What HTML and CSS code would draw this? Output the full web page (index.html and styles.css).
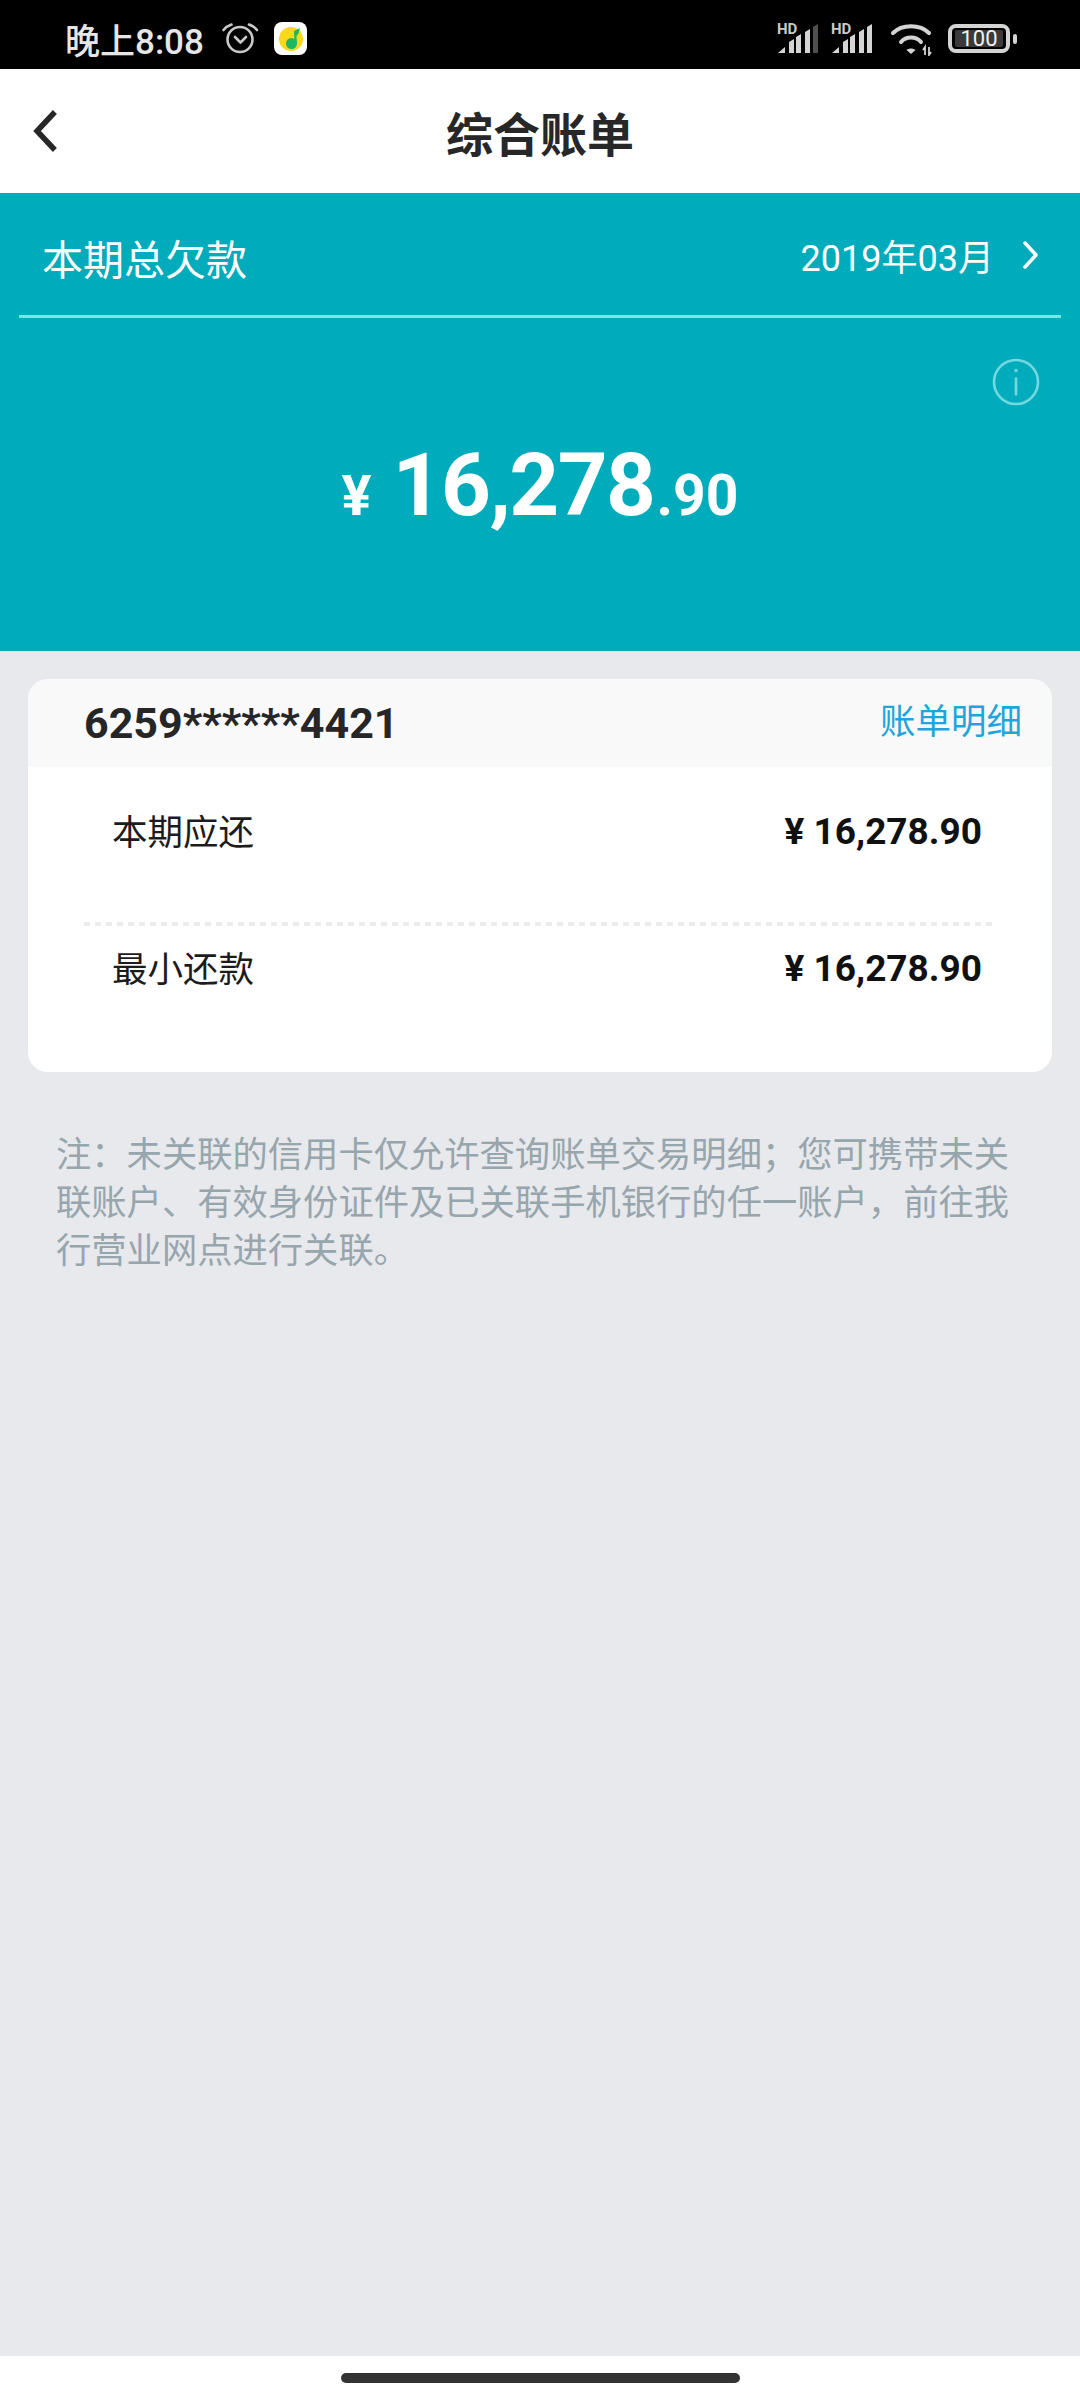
FILE: index.html
```html
<!DOCTYPE html>
<html lang="zh-CN">
<head>
<meta charset="UTF-8" />
<meta name="viewport" content="width=device-width, initial-scale=1.0" />
<title>综合账单</title>
<link rel="stylesheet" href="styles.css">
</head>
<body>
<div class="statusbar">
    <div class="status-left">
        <span class="clock">晚上8:08</span>
        <svg class="alarm" width="40" height="36" viewBox="0 0 40 36" fill="none" stroke="#c9c9c9" stroke-width="2.600" stroke-linecap="round" stroke-linejoin="round">
            <circle cx="20" cy="18.500" r="12.500"/>
            <path d="M15 16l5.500 5.500L26 16"/>
            <path d="M3.500 9C5.500 6.500 8.500 4.500 11.500 3.500M37 9C35 6.500 32 4.500 29 3.500"/>
        </svg>
        <svg class="appicon" width="33" height="33" viewBox="0 0 33 33">
            <rect width="33" height="33" rx="8" fill="#fff"/>
            <circle cx="17" cy="17" r="12" fill="#fbd81b"/>
            <circle cx="17.500" cy="21.500" r="5.500" fill="#1fb765"/>
            <path d="M20.500 22L20 9l6-3-1.500 5.500-2 2.500.5 8z" fill="#1fb765"/>
        </svg>
    </div>
    <div class="status-right">
        <div class="signal">
            <span class="hd">HD</span>
            <svg width="42" height="29" viewBox="0 0 42 29" fill="#d4d4d4">
                <path d="M0 29l7-6v6z"/>
                <path d="M11 18l5-3v14h-5z"/>
                <path d="M18 13l5-3v19h-5z"/>
                <path d="M27 8l5-3v24h-5z"/>
                <path d="M35 3l5-3v29h-5z" fill="#4f4f4f"/>
            </svg>
        </div>
        <div class="signal">
            <span class="hd">HD</span>
            <svg width="42" height="29" viewBox="0 0 42 29" fill="#d4d4d4">
                <path d="M0 29l7-6v6z"/>
                <path d="M11 18l5-3v14h-5z"/>
                <path d="M18 13l5-3v19h-5z"/>
                <path d="M27 8l5-3v24h-5z"/>
                <path d="M35 3l5-3v29h-5z"/>
            </svg>
        </div>
        <svg class="wifi" width="44" height="32" viewBox="0 0 44 32" fill="none" stroke="#d4d4d4" stroke-width="4" stroke-linecap="round">
            <path d="M3 9C12 0 30 0 39 9"/>
            <path d="M11 18C16 12 26 12 31 18"/>
            <path d="M21 30l-4.500-4c2.500-2 6.500-2 9 0z" fill="#d4d4d4" stroke="none"/>
            <path d="M35 31v-8l-2 3M39 23v8l2-3" stroke-width="1.800" stroke-linecap="butt"/>
        </svg>
        <div class="battery">
            <div class="battery-body"><span class="battery-num">100</span></div>
            <div class="battery-nub"></div>
        </div>
    </div>
</div>

<header class="navbar">
    <svg class="back" width="28" height="42" viewBox="0 0 28 42" fill="none" stroke="#272727" stroke-width="5.500" stroke-linecap="square">
        <path d="M21 4L5 21l16 17"/>
    </svg>
    <h1>综合账单</h1>
</header>

<section class="hero">
    <div class="hero-top">
        <span class="hero-label">本期总欠款</span>
        <span class="hero-date">2019年03月
            <svg width="18" height="30" viewBox="0 0 18 30" fill="none" stroke="#fff" stroke-width="3.500" stroke-linecap="round" stroke-linejoin="round">
                <path d="M3 3l11 12L3 27"/>
            </svg>
        </span>
    </div>
    <svg class="info" width="48" height="48" viewBox="0 0 48 48" fill="none" stroke="#73d8e0" stroke-width="2.600">
        <circle cx="24" cy="24" r="22"/>
        <path d="M24 19.500v18"/>
        <circle cx="24" cy="12.500" r="1.300" fill="#73d8e0" stroke-width="1"/>
    </svg>
    <div class="amount">
        <span class="amount-yen">¥</span><span class="amount-int">16,278</span><span class="amount-dec">.90</span>
    </div>
</section>

<main class="content">
    <div class="card">
        <div class="card-head">
            <span class="card-no">6259******4421</span>
            <a class="card-link">账单明细</a>
        </div>
        <div class="card-body">
            <div class="row row-first">
                <span class="row-label">本期应还</span>
                <span class="row-val">¥ 16,278.90</span>
            </div>
            <div class="row-divider"></div>
            <div class="row">
                <span class="row-label">最小还款</span>
                <span class="row-val">¥ 16,278.90</span>
            </div>
        </div>
    </div>
    <p class="note">注&#65306;未关联的信用卡仅允许查询账单交易明细&#65307;您可携带未关联账户、有效身份证件及已关联手机银行的任一账户&#65292;前往我行营业网点进行关联。</p>
</main>

<div class="homebar"><div class="home-pill"></div></div>
</body>
</html>
```

FILE: styles.css
```css
* {
    box-sizing: border-box;
}
body {
    margin: 0;
    width: 1080px;
    height: 2400px;
    display: flex;
    flex-direction: column;
    font-family: Roboto, "Noto Sans CJK SC", sans-serif;
    background-color: #e7e9ed;
    color: #222;
}
.statusbar {
    height: 69px;
    flex: none;
    background: #000;
    display: flex;
    justify-content: space-between;
    align-items: center;
    padding: 8px 63px 0 65px;
}
.status-left, .status-right {
    display: flex;
    align-items: center;
}
.clock {
    font-size: 35px;
    font-weight: 500;
    color: #e6e6e6;
    width: 155px;
}
.alarm {
    margin-right: 14px;
}
.status-right {
    gap: 12px;
}
.signal {
    position: relative;
    width: 42px;
    height: 29px;
}
.hd {
    position: absolute;
    left: -1px;
    top: -1px;
    font-size: 15px;
    font-weight: 700;
    line-height: 12px;
    color: #c9c9c9;
}
.wifi {
    margin: 2px 2px 0 4px;
}
.battery {
    display: flex;
    align-items: center;
    gap: 3px;
}
.battery-body {
    width: 62px;
    height: 29px;
    border: 4px solid #d4d4d4;
    border-radius: 8px;
    padding: 2px 3px;
    display: flex;
}
.battery-num {
    flex: 1;
    background: #3a3a3a;
    border-radius: 2px;
    color: #f0f0f0;
    font-size: 22px;
    line-height: 17px;
    text-align: center;
}
.battery-nub {
    width: 4px;
    height: 10px;
    border-radius: 2px;
    background: #d4d4d4;
}
.navbar {
    height: 124px;
    flex: none;
    background: #fff;
    display: flex;
    align-items: center;
    justify-content: center;
    position: relative;
}
.back {
    position: absolute;
    left: 32px;
    top: 41px;
}
.navbar h1 {
    margin: 0;
    font-size: 47px;
    font-weight: 700;
    color: #272727;
}
.hero {
    height: 458px;
    flex: none;
    background: #00acbb;
    color: #fff;
    position: relative;
}
.hero-top {
    height: 125px;
    margin: 0 19px;
    padding: 2px 21px 0 23px;
    border-bottom: 3px solid #7de3ea;
    display: flex;
    justify-content: space-between;
    align-items: center;
}
.hero-label {
    font-size: 41px;
    margin-top: 4px;
}
.hero-date {
    font-size: 36px;
    display: flex;
    align-items: center;
    gap: 28px;
}
.info {
    position: absolute;
    right: 40px;
    top: 165px;
}
.amount {
    display: flex;
    align-items: baseline;
    justify-content: center;
    margin-top: 117px;
    line-height: 100px;
}
.amount-yen {
    font-size: 56px;
    font-weight: 700;
    margin-right: 21px;
}
.amount-int {
    font-size: 87px;
    font-weight: 700;
    letter-spacing: -1.500px;
}
.amount-dec {
    font-size: 57px;
    font-weight: 700;
    margin-left: 2px;
}
.content {
    flex: 1;
    padding: 28px 28px 0;
}
.card {
    background: #fff;
    border-radius: 20px;
    overflow: hidden;
    height: 393px;
}
.card-head {
    height: 88px;
    background: #f9f9fa;
    padding: 0 30px 0 56px;
    display: flex;
    justify-content: space-between;
    align-items: center;
}
.card-no {
    font-size: 43px;
    font-weight: 700;
    color: #262626;
}
.card-link {
    font-size: 35.500px;
    color: #1fa5dc;
    margin-top: -9px;
}
.card-body {
    padding: 0 60px 0 56px;
}
.row {
    height: 60px;
    margin-top: 12px;
    padding: 0 10px 0 28px;
    display: flex;
    justify-content: space-between;
    align-items: center;
    font-size: 35.500px;
    color: #1c1c1c;
}
.row-first {
    margin-top: 34px;
}
.row-label {
    margin-top: -4px;
}
.row-divider {
    height: 4px;
    margin-top: 61px;
    background: repeating-linear-gradient(90deg, #ececec 0 6px, transparent 6px 11px);
}
.row-val {
    font-size: 37px;
    font-weight: 700;
    color: #111;
}
.note {
    margin: 59px 0 0;
    padding: 0 28px;
    font-size: 35.300px;
    line-height: 48px;
    color: #97a5ac;
}
.homebar {
    height: 44px;
    flex: none;
    background: #fff;
    display: flex;
    justify-content: center;
    align-items: center;
}
.home-pill {
    width: 399px;
    height: 10px;
    border-radius: 5px;
    background: #333;
}
```
